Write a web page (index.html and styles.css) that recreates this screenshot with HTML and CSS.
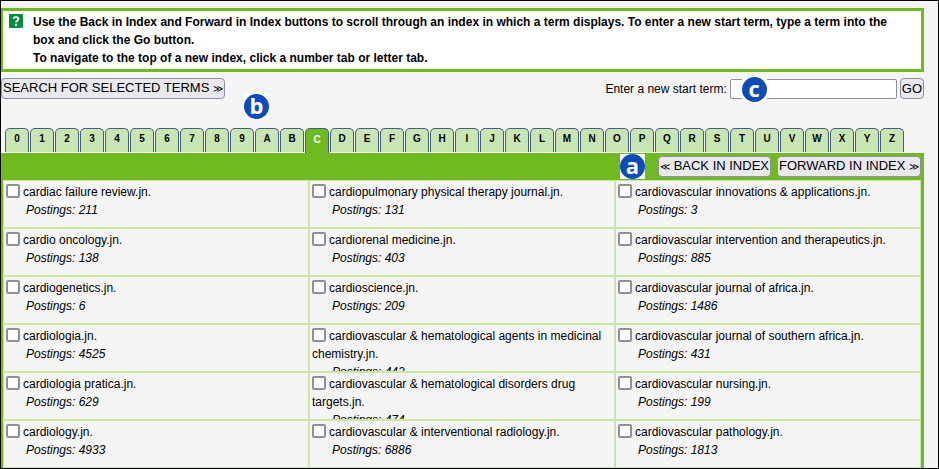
FILE: index.html
```
<!DOCTYPE html>
<html lang="en">
<head>
    <meta charset="UTF-8">
    <meta name="viewport" content="width=device-width, initial-scale=1.0">
    <title>Index Display</title>
    <link rel="stylesheet" href="styles.css">
</head>
<body>
    <main class="page">
        <div class="notice">
            <svg class="help-icon" viewBox="0 0 14 14" aria-hidden="true">
                <rect width="14" height="14" rx="1" fill="#078a43"/>
                <path d="M4.6 4.6C4.8 2.7 9.4 2.4 9.4 5C9.4 6.6 7.1 6.6 7.1 8.6" fill="none" stroke="#fff" stroke-width="1.9"/>
                <rect x="6" y="9.8" width="2.1" height="2" fill="#fff"/>
            </svg>
            <p>Use the Back in Index and Forward in Index buttons to scroll through an index in which a term displays. To enter a new start term, type a term into the box and click the Go button.<br>To navigate to the top of a new index, click a number tab or letter tab.</p>
        </div>

        <form class="toolbar">
            <button type="button" class="button">SEARCH FOR SELECTED TERMS <span class="arrows">≫</span></button>
            <span class="marker marker-b"><span>b</span></span>
            <div class="start-term">
                <label for="start-term">Enter a new start term:</label>
                <div class="term-field">
                    <input type="text" id="start-term" class="term-input">
                    <span class="marker marker-c"><span>c</span></span>
                </div>
                <button type="button" class="button">GO</button>
            </div>
        </form>

        <nav class="tabs">
            <a href="#">0</a>
            <a href="#">1</a>
            <a href="#">2</a>
            <a href="#">3</a>
            <a href="#">4</a>
            <a href="#">5</a>
            <a href="#">6</a>
            <a href="#">7</a>
            <a href="#">8</a>
            <a href="#">9</a>
            <a href="#">A</a>
            <a href="#">B</a>
            <a href="#" class="active">C</a>
            <a href="#">D</a>
            <a href="#">E</a>
            <a href="#">F</a>
            <a href="#">G</a>
            <a href="#">H</a>
            <a href="#">I</a>
            <a href="#">J</a>
            <a href="#">K</a>
            <a href="#">L</a>
            <a href="#">M</a>
            <a href="#">N</a>
            <a href="#">O</a>
            <a href="#">P</a>
            <a href="#">Q</a>
            <a href="#">R</a>
            <a href="#">S</a>
            <a href="#">T</a>
            <a href="#">U</a>
            <a href="#">V</a>
            <a href="#">W</a>
            <a href="#">X</a>
            <a href="#">Y</a>
            <a href="#">Z</a>
        </nav>

        <section class="index">
            <div class="index-nav">
                <span class="marker"><span>a</span></span>
                <button type="button" class="button back-button"><span class="arrows">≪</span> BACK IN INDEX</button>
                <button type="button" class="button">FORWARD IN INDEX <span class="arrows">≫</span></button>
            </div>
            <table class="terms">
                <tr>
                    <td><div class="term"><input type="checkbox" id="t1"><label for="t1">cardiac failure review.jn.</label><em>Postings: 211</em></div></td>
                    <td><div class="term"><input type="checkbox" id="t2"><label for="t2">cardiopulmonary physical therapy journal.jn.</label><em>Postings: 131</em></div></td>
                    <td><div class="term"><input type="checkbox" id="t3"><label for="t3">cardiovascular innovations &amp; applications.jn.</label><em>Postings: 3</em></div></td>
                </tr>
                <tr>
                    <td><div class="term"><input type="checkbox" id="t4"><label for="t4">cardio oncology.jn.</label><em>Postings: 138</em></div></td>
                    <td><div class="term"><input type="checkbox" id="t5"><label for="t5">cardiorenal medicine.jn.</label><em>Postings: 403</em></div></td>
                    <td><div class="term"><input type="checkbox" id="t6"><label for="t6">cardiovascular intervention and therapeutics.jn.</label><em>Postings: 885</em></div></td>
                </tr>
                <tr>
                    <td><div class="term"><input type="checkbox" id="t7"><label for="t7">cardiogenetics.jn.</label><em>Postings: 6</em></div></td>
                    <td><div class="term"><input type="checkbox" id="t8"><label for="t8">cardioscience.jn.</label><em>Postings: 209</em></div></td>
                    <td><div class="term"><input type="checkbox" id="t9"><label for="t9">cardiovascular journal of africa.jn.</label><em>Postings: 1486</em></div></td>
                </tr>
                <tr>
                    <td><div class="term"><input type="checkbox" id="t10"><label for="t10">cardiologia.jn.</label><em>Postings: 4525</em></div></td>
                    <td><div class="term"><input type="checkbox" id="t11"><label for="t11">cardiovascular &amp; hematological agents in medicinal chemistry.jn.</label><em>Postings: 442</em></div></td>
                    <td><div class="term"><input type="checkbox" id="t12"><label for="t12">cardiovascular journal of southern africa.jn.</label><em>Postings: 431</em></div></td>
                </tr>
                <tr>
                    <td><div class="term"><input type="checkbox" id="t13"><label for="t13">cardiologia pratica.jn.</label><em>Postings: 629</em></div></td>
                    <td><div class="term"><input type="checkbox" id="t14"><label for="t14">cardiovascular &amp; hematological disorders drug targets.jn.</label><em>Postings: 474</em></div></td>
                    <td><div class="term"><input type="checkbox" id="t15"><label for="t15">cardiovascular nursing.jn.</label><em>Postings: 199</em></div></td>
                </tr>
                <tr>
                    <td><div class="term"><input type="checkbox" id="t16"><label for="t16">cardiology.jn.</label><em>Postings: 4933</em></div></td>
                    <td><div class="term"><input type="checkbox" id="t17"><label for="t17">cardiovascular &amp; interventional radiology.jn.</label><em>Postings: 6886</em></div></td>
                    <td><div class="term"><input type="checkbox" id="t18"><label for="t18">cardiovascular pathology.jn.</label><em>Postings: 1813</em></div></td>
                </tr>
            </table>
        </section>
    </main>
</body>
</html>
```
FILE: styles.css
```
* {
    margin: 0;
    padding: 0;
    box-sizing: border-box;
}

body {
    font-family: "Liberation Sans", Arial, sans-serif;
    font-size: 12px;
    line-height: 18px;
    color: #000;
    background: #f5f5f5;
}

.page {
    min-height: 100vh;
    padding: 7px 14px 0 0;
    border: 1px solid #000;
}

.notice {
    display: flex;
    gap: 10px;
    padding: 2px 20px 2px 6px;
    background: #fff;
    border: 3px solid #6eba1f;
    border-left-width: 2px;
    font-weight: bold;
}

.help-icon {
    flex: none;
    width: 14px;
    height: 14px;
    margin-top: 1px;
}

.toolbar {
    position: relative;
    display: flex;
    justify-content: space-between;
    align-items: flex-start;
    height: 50px;
    margin-top: 6px;
}

.button {
    height: 21px;
    padding: 0 1px;
    font-family: inherit;
    font-size: 13px;
    line-height: 18px;
    white-space: nowrap;
    color: #000;
    background: #e9e9ed;
    border: 1px solid #8f8f9d;
    border-radius: 4px;
}

.arrows {
    font-size: 10px;
}

.start-term {
    display: flex;
    align-items: center;
    gap: 3px;
}

.term-field {
    position: relative;
    display: flex;
}

.term-input {
    width: 167px;
    height: 20px;
    padding: 0 4px;
    font-family: inherit;
    font-size: 12px;
    background: #fff;
    border: 1px solid #8f8f9d;
    border-radius: 2px;
}

.marker {
    display: block;
    width: 25px;
    height: 25px;
    background: #fff;
}

.marker span {
    display: block;
    height: 25px;
    border-radius: 50%;
    background: #0b4cba;
    color: #fff;
    font-family: "Open Sans", sans-serif;
    font-size: 22px;
    font-weight: bold;
    line-height: 22px;
    text-align: center;
}

.marker-b {
    position: absolute;
    top: 16px;
    left: 243px;
}

.marker-c {
    position: absolute;
    top: -2px;
    left: 12px;
}

.tabs {
    display: flex;
    gap: 1px;
    height: 25px;
    padding-left: 4px;
    border-bottom: 1px solid #fff;
}

.tabs a {
    width: 24px;
    height: 24px;
    border: 1px solid #47607a;
    border-bottom: none;
    border-radius: 5px 5px 0 0;
    background: #c8e6b4;
    color: #000;
    font-size: 10px;
    font-weight: bold;
    line-height: 20px;
    text-align: center;
    text-decoration: none;
}

.tabs .active {
    height: 25px;
    background: #6eba1f;
    color: #fff;
    line-height: 22px;
}

.index {
    border: solid #6eba1f;
    border-width: 0 3px 0 2px;
}

.index-nav {
    display: flex;
    justify-content: flex-end;
    align-items: center;
    gap: 6px;
    height: 27px;
    background: #6eba1f;
}

.back-button {
    margin-left: 7px;
}

.terms {
    width: 100%;
    table-layout: fixed;
    border-spacing: 0;
}

.terms td {
    height: 48px;
    border: 1px solid #c8e6a8;
    vertical-align: top;
}

/* long names push the postings line out of the cell */
.term {
    height: 46px;
    padding: 2px 2px 0;
    overflow: hidden;
}

.term input {
    appearance: none;
    width: 14px;
    height: 14px;
    margin-right: 3px;
    vertical-align: -2px;
    background: #fff;
    border: 2px solid #8f8f9d;
    border-radius: 2px;
}

.term em {
    display: block;
    padding-left: 20px;
}
```
